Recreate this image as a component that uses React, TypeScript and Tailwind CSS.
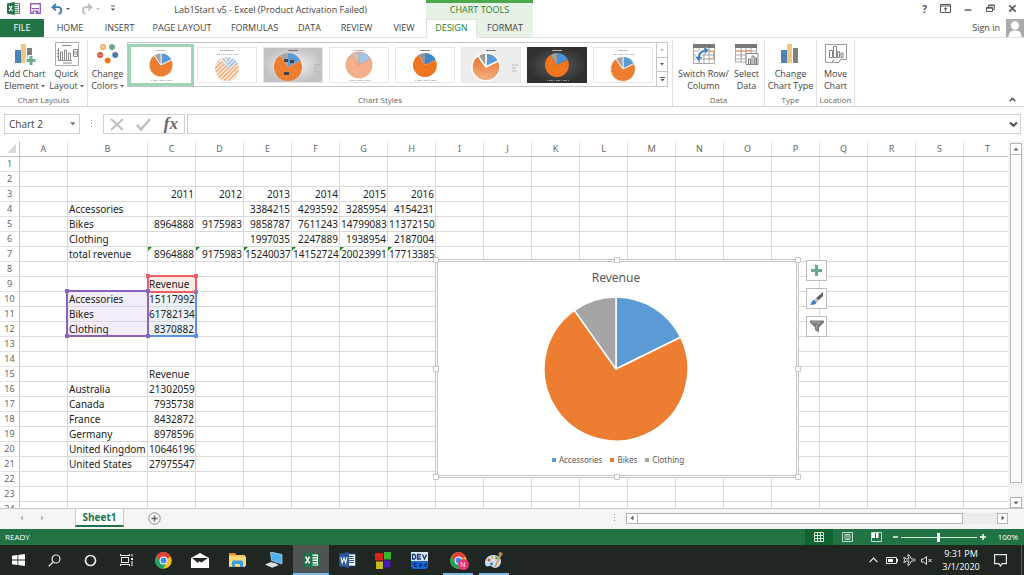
import type { ReactNode } from "react";

const UI = "font-['Open_Sans','Noto_Sans',sans-serif]";
const SHEET = "font-['Noto_Sans','Open_Sans',sans-serif]";

const BLUE = "#5b9bd5";
const ORANGE = "#ed7d31";
const GRAY = "#a5a5a5";

const chartData = [
  { name: "Accessories", value: 15117992, color: BLUE },
  { name: "Bikes", value: 61782134, color: ORANGE },
  { name: "Clothing", value: 8370882, color: GRAY },
];

function slicePaths(cx: number, cy: number, r: number) {
  const total = chartData.reduce((s, d) => s + d.value, 0);
  let start = -Math.PI / 2;
  return chartData.map((d) => {
    const end = start + (d.value / total) * Math.PI * 2;
    const large = end - start > Math.PI ? 1 : 0;
    const path = `M${cx} ${cy}L${cx + r * Math.cos(start)} ${cy + r * Math.sin(start)}A${r} ${r} 0 ${large} 1 ${
      cx + r * Math.cos(end)
    } ${cy + r * Math.sin(end)}Z`;
    start = end;
    return path;
  });
}

function Slices({
  cx,
  cy,
  r,
  gap,
  fills = [BLUE, ORANGE, GRAY],
  line = "#fff",
}: {
  cx: number;
  cy: number;
  r: number;
  gap: number;
  fills?: string[];
  line?: string;
}) {
  return (
    <g stroke={line} strokeWidth={gap} strokeLinejoin="round">
      {slicePaths(cx, cy, r).map((d, i) => (
        <path key={i} d={d} fill={fills[i]} />
      ))}
    </g>
  );
}

/* ---------- Title bar ---------- */

function ExcelLogo({ size = 13 }: { size?: number }) {
  return (
    <svg width={size} height={size} viewBox="0 0 16 16">
      <rect x="8" y="2" width="7.5" height="12" fill="#fff" stroke="#217346" />
      <path d="M9 4.5h5M9 7h5M9 9.5h5M9 12h5" stroke="#217346" strokeWidth="1.2" />
      <path d="M0 1.8L9.5 0v16L0 14.2z" fill="#217346" />
      <path d="M2.6 4.6l4 6.8M6.6 4.6l-4 6.8" stroke="#fff" strokeWidth="1.5" />
    </svg>
  );
}

function TitleBar() {
  return (
    <header className="flex h-[19px] shrink-0 items-stretch bg-white">
      <div className="flex flex-1 items-center pb-[2px] pl-[7px]">
        <ExcelLogo />
        <button aria-label="Save" className="ml-[10px]">
          <svg width="11" height="11" viewBox="0 0 11 11">
            <path d="M.7.7h9.6v9.6H.7z" fill="#fff" stroke="#9461bd" strokeWidth="1.4" />
            <path d="M2 5.6h7" stroke="#9461bd" strokeWidth="1.2" />
            <path d="M2.5 7.5h6V11h-6z" fill="#9461bd" />
            <path d="M4 8.6h1.6V11H4z" fill="#fff" />
          </svg>
        </button>
        <button aria-label="Undo" className="ml-[10px]">
          <svg width="20" height="12" viewBox="0 0 20 12">
            <path d="M5 1L1.5 4.2 5 7.4M2 4.2h5.2c4 0 4 6 .3 6.6" fill="none" stroke="#3c79b5" strokeWidth="1.8" />
            <path d="M15 5h4l-2 2z" fill="#555" />
          </svg>
        </button>
        <button aria-label="Redo" className="ml-[10px]">
          <svg width="20" height="12" viewBox="0 0 20 12">
            <path d="M7 1l3.5 3.2L7 7.4M10 4.2H5c-4 0-4 6-.3 6.6" fill="none" stroke="#bdbdbd" strokeWidth="1.8" />
            <path d="M15 5h4l-2 2z" fill="#bdbdbd" />
          </svg>
        </button>
        <button aria-label="Customize toolbar" className="ml-[9px]">
          <svg width="6" height="7" viewBox="0 0 6 7">
            <path d="M1 1h4" stroke="#666" />
            <path d="M.8 3.5h4.4L3 5.8z" fill="#555" />
          </svg>
        </button>
      </div>
      <h1 className="flex items-center whitespace-nowrap text-[9px] text-[#444]">
        Lab1Start v5 - Excel (Product Activation Failed)
      </h1>
      <div className="ml-[59px] flex w-[107px] items-center justify-center border-t-[3px] border-[#4ba84b] bg-[#e6f2e6] pb-[2px] text-[9px] text-[#1e8229]">
        CHART TOOLS
      </div>
      <div className="flex w-[491px] items-center justify-end gap-[13px] pr-[7px] pb-[2px] text-[#555]">
        <button aria-label="Help" className="text-[10px] font-bold leading-none">
          ?
        </button>
        <button aria-label="Ribbon display options">
          <svg width="11" height="9" viewBox="0 0 11 9" fill="none" stroke="currentColor">
            <path d="M.5.5h10v8H.5zM.5 2h10M5.5 7.5V4M4 5.2L5.5 3.8 7 5.2" />
          </svg>
        </button>
        <button aria-label="Minimize">
          <svg width="8" height="9" viewBox="0 0 8 9">
            <path d="M.5 6h7" stroke="currentColor" strokeWidth="1.4" />
          </svg>
        </button>
        <button aria-label="Restore" className="ml-px">
          <svg width="9" height="9" viewBox="0 0 9 9" fill="none" stroke="currentColor">
            <path d="M.5 3.5h6v4h-6zM.5 4.2h6M2.5 3V1h5.8v4.5H7M2.5 1.6h5.8" />
          </svg>
        </button>
        <button aria-label="Close">
          <svg width="9" height="9" viewBox="0 0 9 9">
            <path d="M1.2 1.2l6.4 6.4M7.6 1.2L1.2 7.6" stroke="currentColor" strokeWidth="1.6" />
          </svg>
        </button>
      </div>
    </header>
  );
}

const tabs = [
  { label: "HOME", w: "w-[52px]" },
  { label: "INSERT", w: "w-[47px]" },
  { label: "PAGE LAYOUT", w: "w-[78px]" },
  { label: "FORMULAS", w: "w-[67px]" },
  { label: "DATA", w: "w-[43px]" },
  { label: "REVIEW", w: "w-[51px]" },
  { label: "VIEW", w: "w-[44px]" },
];

function TabBar() {
  return (
    <nav className="flex h-[19px] shrink-0 items-stretch border-b border-[#e1e1e1] text-[9px] text-[#444]">
      <button className="w-[44px] bg-[#217346] text-white">FILE</button>
      {tabs.map((t) => (
        <button key={t.label} className={`whitespace-nowrap ${t.w}`}>
          {t.label}
        </button>
      ))}
      <div className="flex items-stretch bg-[#e6f2e6]">
        <button className="-mb-px w-[51px] border-x border-t border-[#e1e1e1] bg-white pb-[2px] text-[#1e8229]">
          DESIGN
        </button>
        <button className="w-[56px]">FORMAT</button>
      </div>
      <div className="flex flex-1 items-center justify-end gap-[6px]">
        <a href="#signin">Sign in</a>
        <svg width="18" height="18" viewBox="0 0 18 18">
          <path d="M0 0h18v18H0z" fill="#ababab" />
          <circle cx="9" cy="6.5" r="4.2" fill="#fff" />
          <path d="M2.5 18c0-4 2-6.2 4.5-6.6h4c2.500.4 4.500 2.600 4.500 6.600z" fill="#fff" />
        </svg>
      </div>
    </nav>
  );
}

/* ---------- Ribbon ---------- */

function Group({ label, className, children }: { label: string; className: string; children: ReactNode }) {
  return (
    <section className={`flex flex-col border-r border-[#e1e1e1] ${className}`}>
      <div className="flex flex-1 items-start justify-center">{children}</div>
      <h2 className="text-center text-[8px] leading-[12px] text-[#666]">{label}</h2>
    </section>
  );
}

function BigButton({
  icon,
  lines,
  arrow,
  className,
}: {
  icon: ReactNode;
  lines: [string, string];
  arrow?: boolean;
  className: string;
}) {
  return (
    <button className={`flex flex-col items-center whitespace-nowrap text-[9px] leading-[12px] text-[#444] ${className}`}>
      <span className="flex h-[28px] items-center">{icon}</span>
      <span>{lines[0]}</span>
      <span className="flex items-center gap-[2px]">
        {lines[1]}
        {arrow && (
          <svg width="4" height="3" viewBox="0 0 4 3">
            <path d="M0 0h4L2 2.500z" fill="#666" />
          </svg>
        )}
      </span>
    </button>
  );
}

function Bars({ plus }: { plus?: boolean }) {
  return (
    <svg width="22" height="22" viewBox="0 0 22 22">
      <path d="M1 7h6v13H1z" fill="#4f81b9" />
      <path d="M7 1h5v19H7z" fill="#eec780" />
      <path d="M13 5h5v15h-5z" fill="#7f7f7f" />
      {plus && (
        <>
          <path d="M16 12v10M11.500 17.500H22" stroke="#fff" strokeWidth="5" />
          <path d="M17 13v9M12.500 17.500h9" stroke="#6aab8e" strokeWidth="3" />
        </>
      )}
    </svg>
  );
}

function QuickLayoutIcon() {
  return (
    <svg width="24" height="24" viewBox="0 0 24 24" fill="none" stroke="#8a8a8a">
      <path d="M.5.500h23v23H.500z" stroke="#ababab" />
      <path d="M7 3.500h9M3.500 6v13M2 8.500h2M2 11.500h2M2 14.500h2M4 18.500h13M8 21h9" />
      <path d="M5.500 18v-8h2v8M9.500 18V8h2v10M13.500 18v-7h2v7M18.500 7.500h4v7h-4zM19 10h3M19 12h3" />
    </svg>
  );
}

function ColorsIcon() {
  return (
    <svg width="22" height="22" viewBox="0 0 22 22">
      <circle cx="6" cy="4" r="3" fill="#f0a860" />
      <circle cx="15" cy="4" r="3" fill="#6fa78c" />
      <circle cx="3.200" cy="12" r="3" fill="#d0583a" />
      <circle cx="18.200" cy="12" r="3" fill="#4f79b0" />
      <circle cx="10.700" cy="17.500" r="3" fill="#ee7c22" />
      <path d="M4 4h4M6 2v4M1.500 12h3.500" stroke="#fff" strokeWidth=".5" />
    </svg>
  );
}

function SwitchIcon() {
  return (
    <svg width="22" height="22" viewBox="0 0 22 22" fill="none">
      <path d="M.500 3h21v17.500H.500zM.500 8h21M.500 12h21M.500 16h21M6 3v17M11 3v17M16 3v17" stroke="#a8a8a8" />
      <path d="M11.500 8.500h9v7h-5M6.500 12v8" stroke="#ed9a5f" />
      <path d="M0 1h22v4H0z" fill="#777" />
      <path d="M5 17c0-6 3-9.500 9-10" stroke="#fff" strokeWidth="5" />
      <path d="M5.500 16.500c0-5 3-8.500 8-9.500" stroke="#3f7fc1" strokeWidth="2" />
      <path d="M2 13.500l3.500 4.500 4-4z" fill="#3f7fc1" />
      <path d="M11 4l4.500 2.800L12 11z" fill="#3f7fc1" />
    </svg>
  );
}

function SelectIcon() {
  return (
    <svg width="24" height="22" viewBox="0 0 24 22" fill="none">
      <path d="M.500 3h21v16H.500zM.500 8h21M.500 12h21M.500 16h21M6 3v16M11 3v16M16 3v16" stroke="#a8a8a8" />
      <path d="M1 8h15M6.500 8v8" stroke="#ed9a5f" />
      <path d="M0 1h22v4H0z" fill="#777" />
      <path d="M11 10.500h12v11H11z" fill="#fff" stroke="#888" />
      <path d="M13.500 21v-5h2v5M17 21v-8h2v8M20 21v-6h1.500v6" stroke="#777" />
    </svg>
  );
}

function MoveIcon() {
  return (
    <svg width="22" height="20" viewBox="0 0 22 20" fill="none" stroke="#999">
      <path d="M.500.500h21v15h-6l-1.500 3H7l2-3M.500.500v18h6l2.500-3" />
      <path d="M4.500 13.500v-7h3v7zM8.500 13.500v-11h3v11zM12.500 13.500v-6h2v6zM16 13.500V9h2v4.500z" stroke="#808080" />
    </svg>
  );
}

function Thumb({ kind }: { kind: number }) {
  const dark = kind === 6;
  const legendRight = kind === 2 || kind === 5;
  const ink = dark ? "#999" : "#b0b0b0";
  const cx = legendRight ? 25 : 30;
  const cy = [18, 22, 20, 18, 18, 20, 18, 22][kind];
  const r = [12, 12, 14, 13, 12, 14, 12, 12.5][kind];
  const fills = [
    [BLUE, ORANGE, GRAY],
    ["url(#hb)", "url(#ho)", "url(#hg)"],
    [BLUE, ORANGE, GRAY],
    ["#9fc5ea", "#f4b08a", "#c4c4c4"],
    ["#3f87cc", "#f0751f", "#969696"],
    ["#5b9bd5", "url(#og)", "#9b9b9b"],
    ["#4a90d6", "#f0751f", "#9a9a9a"],
    [BLUE, ORANGE, GRAY],
  ][kind];
  return (
    <svg width="60" height="36" viewBox="0 0 60 36">
      <defs>
        <pattern id="hb" width="3" height="3" patternUnits="userSpaceOnUse" patternTransform="rotate(45)">
          <path d="M1 0v3" stroke={BLUE} strokeWidth="1.200" />
        </pattern>
        <pattern id="ho" width="3" height="3" patternUnits="userSpaceOnUse" patternTransform="rotate(45)">
          <path d="M1 0v3" stroke={ORANGE} strokeWidth="1.200" />
        </pattern>
        <pattern id="hg" width="3" height="3" patternUnits="userSpaceOnUse" patternTransform="rotate(-45)">
          <path d="M1 0v3" stroke={GRAY} strokeWidth="1.200" />
        </pattern>
        <pattern id="hw" width="2" height="2" patternUnits="userSpaceOnUse" patternTransform="rotate(-45)">
          <path d="M0 0h2v2H0z" fill="#fff" />
          <path d="M1 0v2" stroke="#d2d2d2" strokeWidth=".800" />
        </pattern>
        <linearGradient id="og" x1="0" y1="0" x2="0" y2="1">
          <stop offset="0" stopColor="#ea7228" />
          <stop offset="1" stopColor="#f5b08a" />
        </linearGradient>
        <radialGradient id="lg">
          <stop offset="0" stopColor="#f4f4f4" />
          <stop offset="1" stopColor="#c2c2c2" />
        </radialGradient>
        <radialGradient id="dg">
          <stop offset="0" stopColor="#5c5c5c" />
          <stop offset="1" stopColor="#303030" />
        </radialGradient>
      </defs>
      <path d="M0 0h60v36H0z" fill={dark ? "url(#dg)" : kind === 2 ? "url(#lg)" : kind === 5 ? "url(#hw)" : "#fff"} />
      {kind !== 0 && !dark && <path d="M.500.500h59v35H.500z" fill="none" stroke="#e6e6e6" />}
      <path
        d={kind === 1 ? "M23 3.500h14" : "M25.500 3.500h9"}
        stroke={dark ? "#ddd" : kind === 2 || kind === 4 || kind === 5 ? "#555" : "#aaa"}
        strokeWidth="1.200"
        strokeDasharray="1.500 .400"
      />
      <Slices
        cx={cx}
        cy={cy}
        r={r}
        gap={dark || kind === 2 || kind === 4 || kind === 1 ? 0 : kind === 5 ? 1.5 : 0.8}
        fills={fills}
        line={kind === 3 ? "#ef9a6c" : "#fff"}
      />
      {kind === 2 && <path d="M21 12h4v3h-4zM27 13h4v3h-4zM21 25h5v3h-5z" fill="#444" />}
      {legendRight ? (
        <path d="M51 18h6M51 21h4M51 24h5" stroke="#aaa" strokeWidth="1" strokeDasharray="1.200 .500" />
      ) : kind === 1 || kind === 7 ? (
        <path d="M20 7.500h22" stroke={ink} strokeWidth=".800" strokeDasharray="3 1 1 1" />
      ) : (
        <path d="M20 33.500h22" stroke={ink} strokeWidth=".800" strokeDasharray="1 1 4 1" />
      )}
    </svg>
  );
}

function Gallery() {
  return (
    <div className="flex h-[45px] border border-[#c6c6c6] bg-white">
      <ul className="flex items-center gap-[6px] pr-[3px]">
        <li className="-mr-[3px] flex">
          <button aria-label="Style 1" className="border-[3px] border-[#9fd5b7]">
            <Thumb kind={0} />
          </button>
        </li>
        {[1, 2, 3, 4, 5, 6, 7].map((k) => (
          <li key={k} className="flex">
            <button aria-label={`Style ${k + 1}`}>
              <Thumb kind={k} />
            </button>
          </li>
        ))}
      </ul>
      <div className="flex w-[11px] flex-col divide-y divide-[#c6c6c6] border-l border-[#c6c6c6]">
        <button aria-label="Previous styles" className="flex flex-1 items-center justify-center">
          <svg width="4" height="3" viewBox="0 0 4 3">
            <path d="M0 2.500h4L2 0z" fill="#bbb" />
          </svg>
        </button>
        <button aria-label="Next styles" className="flex flex-1 items-center justify-center">
          <svg width="4" height="3" viewBox="0 0 4 3">
            <path d="M0 0h4L2 2.500z" fill="#555" />
          </svg>
        </button>
        <button aria-label="More styles" className="flex flex-1 items-center justify-center">
          <svg width="5" height="5" viewBox="0 0 5 5">
            <path d="M0 .500h5" stroke="#555" />
            <path d="M.500 2h4l-2 2.500z" fill="#555" />
          </svg>
        </button>
      </div>
    </div>
  );
}

function Ribbon() {
  return (
    <div className="flex h-[69px] shrink-0 border-b border-[#d4d4d4] bg-white pt-[2px]">
      <Group label="Chart Layouts" className="w-[88px]">
        <BigButton className="w-[46px]" icon={<Bars plus />} lines={["Add Chart", "Element"]} arrow />
        <BigButton className="w-[38px]" icon={<QuickLayoutIcon />} lines={["Quick", "Layout"]} arrow />
      </Group>
      <Group label="Chart Styles" className="w-[585px]">
        <BigButton className="w-[39px]" icon={<ColorsIcon />} lines={["Change", "Colors"]} arrow />
        <div className="flex-1 pt-[2px]">
          <div className="flex">
            <Gallery />
          </div>
        </div>
      </Group>
      <Group label="Data" className="w-[92px]">
        <BigButton className="w-[56px]" icon={<SwitchIcon />} lines={["Switch Row/", "Column"]} />
        <BigButton className="w-[30px]" icon={<SelectIcon />} lines={["Select", "Data"]} />
      </Group>
      <Group label="Type" className="w-[52px]">
        <BigButton className="w-[50px]" icon={<Bars />} lines={["Change", "Chart Type"]} />
      </Group>
      <Group label="Location" className="w-[38px]">
        <BigButton className="w-[38px]" icon={<MoveIcon />} lines={["Move", "Chart"]} />
      </Group>
      <div className="flex flex-1 items-end justify-end pr-[8px] pb-[4px]">
        <button aria-label="Collapse ribbon">
          <svg width="7" height="5" viewBox="0 0 7 5">
            <path d="M.700 4.200L3.500 1.400l2.800 2.800" fill="none" stroke="#555" strokeWidth="1.500" />
          </svg>
        </button>
      </div>
    </div>
  );
}

function FormulaBar() {
  return (
    <div className="flex h-[34px] shrink-0 items-center bg-white pr-[3px] pl-[4px] text-[#444]">
      <div className="flex h-[20px] w-[76px] items-center border border-[#d0d0d0] pr-[4px]">
        <input
          aria-label="Name box"
          defaultValue="Chart 2"
          className="h-full w-full min-w-0 bg-transparent pl-[4px] text-[10px] outline-none"
        />
        <svg width="6" height="4" viewBox="0 0 6 4">
          <path d="M0 0h6L3 3.500z" fill="#777" />
        </svg>
      </div>
      <svg className="ml-[10px]" width="3" height="9" viewBox="0 0 3 9">
        <path d="M1.500 0v9" stroke="#999" strokeDasharray="1 2" />
      </svg>
      <div className="ml-[10px] flex h-[20px] w-[82px] items-center justify-between border border-[#d0d0d0] px-[6px]">
        <button aria-label="Cancel">
          <svg width="14" height="13" viewBox="0 0 14 13">
            <path d="M1 1l12 11M13 1L1 12" stroke="#bdbdbd" strokeWidth="1.800" />
          </svg>
        </button>
        <button aria-label="Enter">
          <svg width="15" height="13" viewBox="0 0 15 13">
            <path d="M1 7l4 4.500L14 1" fill="none" stroke="#bdbdbd" strokeWidth="2.400" />
          </svg>
        </button>
        <button
          aria-label="Insert function"
          className="font-['Liberation_Serif',serif] text-[17px] leading-[16px] font-bold text-[#666] italic"
        >
          fx
        </button>
      </div>
      <div className="ml-[2px] flex h-[20px] flex-1 items-center border border-[#d0d0d0] pr-[2px]">
        <input aria-label="Formula" className="h-full min-w-0 flex-1 bg-transparent px-1 text-[10px] outline-none" />
        <svg width="9" height="7" viewBox="0 0 9 7">
          <path d="M1 1.500l3.500 3.300L8 1.500" fill="none" stroke="#555" strokeWidth="2.200" />
        </svg>
      </div>
    </div>
  );
}

/* ---------- Sheet ---------- */

const columns = "ABCDEFGHIJKLMNOPQRST".split("");

const rows: Record<number, Record<string, string>> = {
  3: { C: "2011", D: "2012", E: "2013", F: "2014", G: "2015", H: "2016" },
  4: { B: "Accessories", E: "3384215", F: "4293592", G: "3285954", H: "4154231" },
  5: { B: "Bikes", C: "8964888", D: "9175983", E: "9858787", F: "7611243", G: "14799083", H: "11372150" },
  6: { B: "Clothing", E: "1997035", F: "2247889", G: "1938954", H: "2187004" },
  7: {
    B: "total revenue",
    C: "8964888",
    D: "9175983",
    E: "15240037",
    F: "14152724",
    G: "20023991",
    H: "17713385",
  },
  9: { C: "Revenue" },
  10: { B: "Accessories", C: "15117992" },
  11: { B: "Bikes", C: "61782134" },
  12: { B: "Clothing", C: "8370882" },
  15: { C: "Revenue" },
  16: { B: "Australia", C: "21302059" },
  17: { B: "Canada", C: "7935738" },
  18: { B: "France", C: "8432872" },
  19: { B: "Germany", C: "8978596" },
  20: { B: "United Kingdom", C: "10646196" },
  21: { B: "United States", C: "27975547" },
};

function cellFill(row: number, col: string) {
  if (row === 9 && col === "C") return "bg-[#fbeae6]";
  if (row >= 10 && row <= 12 && col === "B") return "bg-[#f2edf8]";
  if (row >= 10 && row <= 12 && col === "C") return "bg-[#eaf1fb]";
  return "";
}

function Cell({ row, col }: { row: number; col: string }) {
  const text = rows[row]?.[col] ?? "";
  const numeric = /^\d+$/.test(text);
  return (
    <td
      className={`relative h-[15px] overflow-visible border-r border-b border-[#d9d9d9] p-0 px-px leading-[14px] whitespace-nowrap ${
        numeric ? "text-right" : "text-left"
      } ${cellFill(row, col)}`}
    >
      {row === 7 && numeric && (
        <svg className="absolute top-0 left-0" width="4" height="4" viewBox="0 0 4 4">
          <path d="M0 0h4L0 4z" fill="#1e8a1e" />
        </svg>
      )}
      {text}
    </td>
  );
}

function Sheet() {
  return (
    <table className={`w-[1012px] table-fixed border-separate border-spacing-0 text-[10px] text-[#222] ${SHEET}`}>
      <colgroup>
        <col className="w-[20px]" />
        {columns.map((c) => (
          <col key={c} className={c === "B" ? "w-[80px]" : "w-[48px]"} />
        ))}
      </colgroup>
      <thead className="text-[9px] text-[#666]">
        <tr>
          <th aria-label="Select all" className="h-[16px] border-r border-b border-[#c4c4c4] p-0">
            <svg className="ml-auto mr-[3px]" width="9" height="9" viewBox="0 0 9 9">
              <path d="M9 0v9H0z" fill="#d8d8d8" />
            </svg>
          </th>
          {columns.map((c) => (
            <th
              key={c}
              scope="col"
              className="h-[16px] border-r border-b border-r-[#e4e4e4] border-b-[#c4c4c4] p-0 leading-[15px] font-normal"
            >
              {c}
            </th>
          ))}
        </tr>
      </thead>
      <tbody>
        {Array.from({ length: 24 }, (_, i) => i + 1).map((r) => (
          <tr key={r}>
            <th
              scope="row"
              className="h-[15px] border-r border-b border-r-[#c4c4c4] border-b-[#e4e4e4] p-0 text-[9px] leading-[14px] font-normal text-[#666]"
            >
              {r}
            </th>
            {columns.map((c) => (
              <Cell key={c} row={r} col={c} />
            ))}
          </tr>
        ))}
      </tbody>
    </table>
  );
}

function RangeBox({ className, handle, corners }: { className: string; handle: string; corners: string[] }) {
  return (
    <div className={`pointer-events-none absolute border-2 ${className}`}>
      {corners.map((c) => (
        <span key={c} className={`absolute size-[4px] ${handle} ${c}`} />
      ))}
    </div>
  );
}

const TL = "-top-[3px] -left-[3px]";
const TR = "-top-[3px] -right-[3px]";
const BL = "-bottom-[3px] -left-[3px]";
const BR = "-bottom-[3px] -right-[3px]";

const handles = [
  "-top-[5px] -left-[5px]",
  "-top-[5px] left-[176px]",
  "-top-[5px] -right-[5px]",
  "top-[104px] -left-[5px]",
  "top-[104px] -right-[5px]",
  "-bottom-[5px] -left-[5px]",
  "-bottom-[5px] left-[176px]",
  "-bottom-[5px] -right-[5px]",
];

function PieChart() {
  return (
    <figure
      className={`absolute top-[118px] left-[435px] flex h-[219px] w-[364px] flex-col items-center border-[3px] border-double border-[#c4c4c4] bg-white pr-[2px] text-[#595959] ${SHEET}`}
    >
      {handles.map((h) => (
        <span key={h} className={`absolute size-[6px] rounded-[1px] border border-[#c4c4c4] bg-white ${h}`} />
      ))}
      <figcaption className="mt-[8px] text-[12px] leading-[16px]">Revenue</figcaption>
      <svg className="mt-[9px]" width="148" height="148" viewBox="0 0 148 148">
        <Slices cx={74} cy={74} r={72} gap={1.5} />
      </svg>
      <ul className="mt-[11px] flex gap-[8px] pl-[4px] text-[8px] leading-[12px]">
        <li className="flex items-center gap-[3px]">
          <span className="size-[4px] bg-[#5b9bd5]" />
          Accessories
        </li>
        <li className="flex items-center gap-[3px]">
          <span className="size-[4px] bg-[#ed7d31]" />
          Bikes
        </li>
        <li className="flex items-center gap-[3px]">
          <span className="size-[4px] bg-[#a5a5a5]" />
          Clothing
        </li>
      </ul>
    </figure>
  );
}

function ChartButtons() {
  const box = "flex size-[21px] items-center justify-center border border-[#bdbdbd] bg-white";
  return (
    <div className="absolute top-[119px] left-[806px] flex flex-col gap-[7px]">
      <button aria-label="Chart elements" className={box}>
        <svg width="11" height="11" viewBox="0 0 11 11">
          <path d="M5.500 0v11M0 5.500h11" stroke="#6aab8e" strokeWidth="3.200" />
        </svg>
      </button>
      <button aria-label="Chart styles" className={box}>
        <svg width="15" height="15" viewBox="0 0 15 15">
          <path d="M14 1v4L9.500 9.500 7 7z" fill="#666" />
          <path d="M6.600 7.500l2.500 2.400-1 1.100-2.500-2.400z" fill="#aaa" />
          <path d="M5 8.800l2.800 2.600C6.500 13.800 4 14 1 13.500 3 12.500 2.500 9.500 5 8.800z" fill="#3f7fc1" />
        </svg>
      </button>
      <button aria-label="Chart filters" className={box}>
        <svg width="14" height="13" viewBox="0 0 14 13">
          <path d="M0 .500h14v2L9 7.500v5L5 10V7.500L0 2.500z" fill="#7a7a7a" />
          <path d="M2 2.200h8L6.500 6v3" fill="none" stroke="#b5b5b5" strokeWidth=".800" />
        </svg>
      </button>
    </div>
  );
}

function Arrow({ d }: { d: string }) {
  return (
    <svg width="6" height="6" viewBox="0 0 6 6">
      <path d={d} fill="#666" />
    </svg>
  );
}

function Workspace() {
  return (
    <main className="flex min-h-0 flex-1 bg-[#f4f4f4]">
      <div className="relative min-w-0 flex-1 overflow-hidden bg-white">
        <Sheet />
        <RangeBox
          className="top-[134px] left-[147px] h-[18px] w-[50px] border-[#ec5f66]"
          handle="bg-[#ec5f66]"
          corners={[TL, TR, BR]}
        />
        <RangeBox
          className="top-[149px] left-[147px] h-[47px] w-[50px] border-t-0 border-[#5b8fe8]"
          handle="bg-[#5b8fe8]"
          corners={[BR]}
        />
        <RangeBox
          className="top-[149px] left-[66px] h-[47px] w-[83px] border-[#8b62bf]"
          handle="bg-[#8b62bf]"
          corners={[TL, TR, BL, BR]}
        />
        <PieChart />
        <ChartButtons />
      </div>
      <div className="flex w-[16px] flex-col items-center pt-[2px]">
        <button aria-label="Scroll up" className="flex h-[12px] w-[12px] items-center justify-center border border-[#b5b5b5] bg-white">
          <Arrow d="M.500 4.500h5L3 1.500z" />
        </button>
        <div className="-mt-px h-[329px] w-[12px] border border-[#b5b5b5] bg-white" />
        <div className="w-[12px] flex-1" />
        <button aria-label="Scroll down" className="flex h-[11px] w-[12px] items-center justify-center border border-[#b5b5b5] bg-white">
          <Arrow d="M.500 1.500h5L3 4.500z" />
        </button>
      </div>
    </main>
  );
}

function SheetTabs() {
  return (
    <div className="flex h-[21px] shrink-0 items-start border-t border-[#c9c9c9] bg-[#f4f4f4] text-[#444]">
      <div className="flex h-full w-[75px] items-center gap-[16px] pb-[2px] pl-[19px]">
        <button aria-label="Previous sheet">
          <svg width="5" height="6" viewBox="0 0 5 6">
            <path d="M4 .500v5L1 3z" fill="#bbb" />
          </svg>
        </button>
        <button aria-label="Next sheet">
          <svg width="5" height="6" viewBox="0 0 5 6">
            <path d="M1 .500v5L4 3z" fill="#bbb" />
          </svg>
        </button>
      </div>
      <button className="h-[18px] w-[49px] border-x border-b-2 border-x-[#c9c9c9] border-b-[#217346] bg-white text-[10px] leading-[16px] font-bold text-[#217346]">
        Sheet1
      </button>
      <button aria-label="New sheet" className="ml-[24px] h-full pb-[2px]">
        <svg width="13" height="13" viewBox="0 0 13 13" fill="none">
          <circle cx="6.500" cy="6.500" r="5.700" stroke="#8a8a8a" />
          <path d="M6.500 3.500v6M3.500 6.500h6" stroke="#666" strokeWidth="1.400" />
        </svg>
      </button>
      <div className="flex h-full flex-1 items-center justify-end pr-[16px] pb-[2px]">
        <svg className="mr-[10px]" width="3" height="9" viewBox="0 0 3 9">
          <path d="M1.500 0v9" stroke="#999" strokeDasharray="1 2" />
        </svg>
        <div className="flex h-[11px] w-[382px] bg-[#ececec]">
          <button aria-label="Scroll left" className="flex w-[12px] items-center justify-center border border-[#b5b5b5] bg-white">
            <Arrow d="M4.500.500v5L1.500 3z" />
          </button>
          <div className="-ml-px w-[326px] border border-[#b5b5b5] bg-white" />
          <div className="flex-1" />
          <button aria-label="Scroll right" className="flex w-[11px] items-center justify-center border border-[#b5b5b5] bg-white">
            <Arrow d="M1.500.500v5L4.500 3z" />
          </button>
        </div>
      </div>
    </div>
  );
}

function StatusBar() {
  return (
    <footer className="flex h-[16px] shrink-0 items-center bg-[#217346] pr-[6px] pl-[5px] text-[8px] text-white">
      <span className="flex-1">READY</span>
      <button aria-label="Normal view" className="flex h-[16px] w-[28px] items-center justify-center bg-[#0f6331]">
        <svg width="10" height="10" viewBox="0 0 10 10">
          <path d="M.500.500h9v9h-9zM.500 3.500h9M.500 6.500h9M3.500.500v9M6.500.500v9" fill="none" stroke="#d5e8dc" />
        </svg>
      </button>
      <button aria-label="Page layout view" className="flex w-[29px] items-center justify-center">
        <svg width="11" height="10" viewBox="0 0 11 10">
          <path d="M.500.500h10v9H.500zM3 2.500h5v5H3zM4 4h3M4 6h3" fill="none" stroke="#c4dccd" />
        </svg>
      </button>
      <button aria-label="Page break view" className="flex w-[29px] items-center justify-center">
        <svg width="11" height="10" viewBox="0 0 11 10">
          <path d="M.500.500h10v9H.500z" fill="none" stroke="#c4dccd" />
          <path d="M1 1h3v5H1zM5 1h2.500v5H5z" fill="#fff" />
        </svg>
      </button>
      <button aria-label="Zoom out" className="w-[10px]">
        <svg width="5" height="8" viewBox="0 0 5 8" className="mx-auto">
          <path d="M0 4h5" stroke="#fff" strokeWidth="1.400" />
        </svg>
      </button>
      <div className="relative flex h-[10px] w-[76px] items-center">
        <span className="h-px w-full bg-[#d5e8dc]" />
        <input
          type="range"
          aria-label="Zoom"
          className="absolute inset-0 m-0 w-full appearance-none bg-transparent [&::-webkit-slider-thumb]:h-[9px] [&::-webkit-slider-thumb]:w-[3px] [&::-webkit-slider-thumb]:appearance-none [&::-webkit-slider-thumb]:bg-white"
        />
      </div>
      <button aria-label="Zoom in" className="w-[12px]">
        <svg width="6" height="8" viewBox="0 0 6 8" className="mx-auto">
          <path d="M0 4h6M3 1v6" stroke="#fff" strokeWidth="1.400" />
        </svg>
      </button>
      <span className="ml-[9px]">100%</span>
    </footer>
  );
}

/* ---------- Taskbar ---------- */

const stroke = { fill: "none", stroke: "#e8e8e8" };

const pinned: { name: string; icon: ReactNode; state?: "open" | "active" }[] = [
  {
    name: "Start",
    icon: (
      <svg width="13" height="12" viewBox="0 0 13 12">
        <path d="M0 1.700L5.500 1v4.600H0zM6.300.900L13 0v5.600H6.300zM0 6.400h5.500V11L0 10.300zM6.300 6.400H13V12l-6.700-.900z" fill="#fff" />
      </svg>
    ),
  },
  {
    name: "Search",
    icon: (
      <svg width="13" height="13" viewBox="0 0 13 13">
        <circle cx="8" cy="5" r="4" {...stroke} strokeWidth="1.200" />
        <path d="M5.200 8L.700 12.300" {...stroke} strokeWidth="1.300" />
      </svg>
    ),
  },
  {
    name: "Cortana",
    icon: (
      <svg width="13" height="13" viewBox="0 0 13 13">
        <circle cx="6.500" cy="6.500" r="5" {...stroke} strokeWidth="1.700" />
      </svg>
    ),
  },
  {
    name: "Task view",
    icon: (
      <svg width="13" height="12" viewBox="0 0 13 12">
        <path d="M1.500 3.500h7v5h-7zM.500 0v1.500h9V0M.500 12v-1.500h9V12M12 0v2.500M12 7v5" {...stroke} strokeWidth="1.100" />
        <path d="M11 4h2v2h-2z" fill="#fff" />
      </svg>
    ),
  },
  {
    name: "Chrome",
    icon: <ChromeIcon />,
  },
  {
    name: "Mail",
    icon: (
      <svg width="18" height="15" viewBox="0 0 18 15">
        <path d="M0 5L9 0l9 5v10H0z" fill="#fff" />
        <path d="M1 5h16l-6.500 4.500-2.500-1.200L7 10z" fill="#1f2723" />
      </svg>
    ),
  },
  {
    name: "File Explorer",
    icon: (
      <svg width="17" height="15" viewBox="0 0 17 15">
        <path d="M0 0h6l1 2h9v12H0z" fill="#f0c04a" />
        <path d="M0 3.500h17V13H0z" fill="#fbd879" />
        <path d="M0 0h6v2H0z" fill="#e0902a" />
        <path d="M3 14V9.500c0-1.500 1-2 2-2h7c1 0 2 .500 2 2V14h-3v-3H6v3z" fill="#3c9ee0" />
      </svg>
    ),
  },
  {
    name: "This PC",
    icon: (
      <svg width="18" height="16" viewBox="0 0 18 16">
        <path d="M5.500 0L17 2.500v9.500L6.500 8.500z" fill="#4fb2ee" stroke="#b8dcf3" strokeWidth=".700" />
        <path d="M9 10.500l3 1-3 1.500z" fill="#9aa" />
        <path d="M0 12.500l6-2.500 8 3-7 2.800z" fill="#dfe5e8" />
      </svg>
    ),
  },
  { name: "Excel", icon: <ExcelLogo size={16} />, state: "active" },
  {
    name: "Word",
    icon: (
      <svg width="17" height="16" viewBox="0 0 17 16">
        <path d="M8 2h8.500v12H8z" fill="#fff" stroke="#2b579a" />
        <path d="M10 4.500h5M10 6.500h5M10 8.500h5M10 10.500h5" stroke="#2b579a" />
        <path d="M0 1.800L10 0v16L0 14.200z" fill="#2b579a" />
        <path d="M2 5l1.200 6L5 6l1.700 5L8 5" fill="none" stroke="#fff" strokeWidth="1.100" />
      </svg>
    ),
  },
  {
    name: "Blocks",
    icon: (
      <svg width="17" height="17" viewBox="0 0 17 17">
        <path d="M0 1h8v7.500H0z" fill="#d8221c" />
        <path d="M9 0h7v7.500H9z" fill="#35b52c" />
        <path d="M1 9.500h7V17H1z" fill="#c6bd1d" />
        <path d="M9 8.500h6.500V15L9 16z" fill="#4a18b4" />
      </svg>
    ),
  },
  {
    name: "Dev-C++",
    icon: (
      <svg width="17" height="17" viewBox="0 0 17 17">
        <path d="M0 0h17v9H0z" fill="#dfe7f3" />
        <path d="M1.500 2.500v4.500h2l1-1v-2.500l-1-1zM10 2.500H6.500v4.500H10M6.500 4.800h3M11.500 2.500l2 4.500 2-4.500" fill="none" stroke="#16357c" strokeWidth="1.300" />
        <path d="M0 9h17v6l-2 2H2l-2-2z" fill="#1565d6" />
        <path d="M6 11.500H3.500v3H6M7.500 13h4M9.500 11v4M12.500 13h4M14.500 11v4" fill="none" stroke="#0a2c70" strokeWidth="1.200" />
      </svg>
    ),
  },
  {
    name: "Chrome profile",
    state: "open",
    icon: (
      <span className="relative">
        <ChromeIcon />
        <span className="absolute -right-[2px] -bottom-px flex size-[11px] items-center justify-center rounded-full bg-[#e8336f] text-[7px] leading-none text-white">
          N
        </span>
      </span>
    ),
  },
  {
    name: "Paint",
    state: "open",
    icon: (
      <svg width="18" height="17" viewBox="0 0 18 17">
        <path d="M8 3C3 3 0 7 0 11c0 3 2 4 4 3s3 2 6 2c4 0 6-4 6-7 0-4-4-6-8-6z" fill="#c9dff0" />
        <circle cx="4" cy="8" r="1.500" fill="#e0492f" />
        <circle cx="7.500" cy="5.500" r="1.400" fill="#f2b51d" />
        <circle cx="11.500" cy="6" r="1.400" fill="#4caf50" />
        <circle cx="6.500" cy="12" r="1.400" fill="#3a70c8" />
        <path d="M15.500 3.500L10 15" stroke="#e88b2e" strokeWidth="1.600" />
        <path d="M14 0l4 1-2 4-2.500-1z" fill="#b58a5c" />
      </svg>
    ),
  },
];

function ChromeIcon() {
  return (
    <svg width="17" height="17" viewBox="0 0 17 17" className="block">
      <circle cx="8.500" cy="8.500" r="8.300" fill="#fbc116" />
      <path d="M8.500 8.500L1.300 4.300A8.300 8.300 0 0 1 15.700 4.500z" fill="#db4437" />
      <path d="M8.500 4.600h7.300L15.700 4.400A8.300 8.300 0 0 0 1.300 4.300l3.800 6.200z" fill="#db4437" />
      <path d="M1.300 4.300A8.300 8.300 0 0 0 8 16.800l3.800-6.400-6.700.100z" fill="#1da462" />
      <circle cx="8.500" cy="8.500" r="3.900" fill="#fff" />
      <circle cx="8.500" cy="8.500" r="3" fill="#4587f3" />
    </svg>
  );
}

const stateClass = {
  active: "w-[36px] border-b-2 border-[#76b9ed] bg-[#4e5452] pt-[2px]",
  open: "ml-[6px] w-[30px] border-b-2 border-[#76b9ed] pt-[2px]",
  idle: "w-[36px]",
};

function TaskButton({ item }: { item: (typeof pinned)[number] }) {
  return (
    <button
      aria-label={item.name}
      className={`flex h-full items-center justify-center ${stateClass[item.state ?? "idle"]}`}
    >
      {item.icon}
    </button>
  );
}

function Taskbar() {
  return (
    <div className="flex h-[30px] shrink-0 items-stretch bg-[#202723] text-white">
      <div className="flex">
        {pinned.slice(0, 4).map((p) => (
          <TaskButton key={p.name} item={p} />
        ))}
      </div>
      <div className="ml-px flex gap-px">
        {pinned.slice(4, 9).map((p) => (
          <TaskButton key={p.name} item={p} />
        ))}
      </div>
      <div className="flex">
        {pinned.slice(9).map((p) => (
          <TaskButton key={p.name} item={p} />
        ))}
      </div>
      <div className="flex flex-1 items-center justify-end">
        <button aria-label="Hidden icons">
          <svg width="9" height="6" viewBox="0 0 9 6">
            <path d="M.700 5L4.500 1.200 8.300 5" {...stroke} strokeWidth="1.200" />
          </svg>
        </button>
        <svg className="ml-[8px]" width="12" height="7" viewBox="0 0 12 7">
          <path d="M.500.500h10v6H.500z" {...stroke} />
          <path d="M2 2h5v3H2zM11 2h1v3h-1z" fill="#fff" />
        </svg>
        <svg className="ml-[5px]" width="13" height="12" viewBox="0 0 13 12">
          <path d="M12.300 6c0-.700-.800-1-1.500-1H8.500L6 .800H4.800L6 5H3L2 3.500H.800L1.500 6 .800 8.500H2L3 7h3l-1.200 4.200H6L8.500 7h2.300c.700 0 1.500-.300 1.500-1z" {...stroke} strokeWidth=".900" />
        </svg>
        <svg className="ml-[5px]" width="11" height="9" viewBox="0 0 11 9">
          <path d="M.500 3v3H2.500L5.500 8.500v-8L2.500 3zM7.500 3l3 3M10.500 3l-3 3" {...stroke} />
        </svg>
        <div className="ml-[8px] w-[42px] text-center text-[9px] leading-[13px] whitespace-nowrap">
          <div>9:31 PM</div>
          <div>3/1/2020</div>
        </div>
        <button aria-label="Notifications" className="mr-[14px] ml-[12px]">
          <svg width="13" height="13" viewBox="0 0 13 13">
            <path d="M.600.600h11.800v9H8L6.500 12 5 9.600H.600z" {...stroke} strokeWidth="1.200" />
          </svg>
        </button>
        <span className="h-full w-[3px] border-l border-[#555c58]" />
      </div>
    </div>
  );
}

export default function App() {
  return (
    <div className={`flex h-screen flex-col overflow-hidden bg-white ${UI}`}>
      <TitleBar />
      <TabBar />
      <Ribbon />
      <FormulaBar />
      <Workspace />
      <SheetTabs />
      <StatusBar />
      <Taskbar />
    </div>
  );
}
